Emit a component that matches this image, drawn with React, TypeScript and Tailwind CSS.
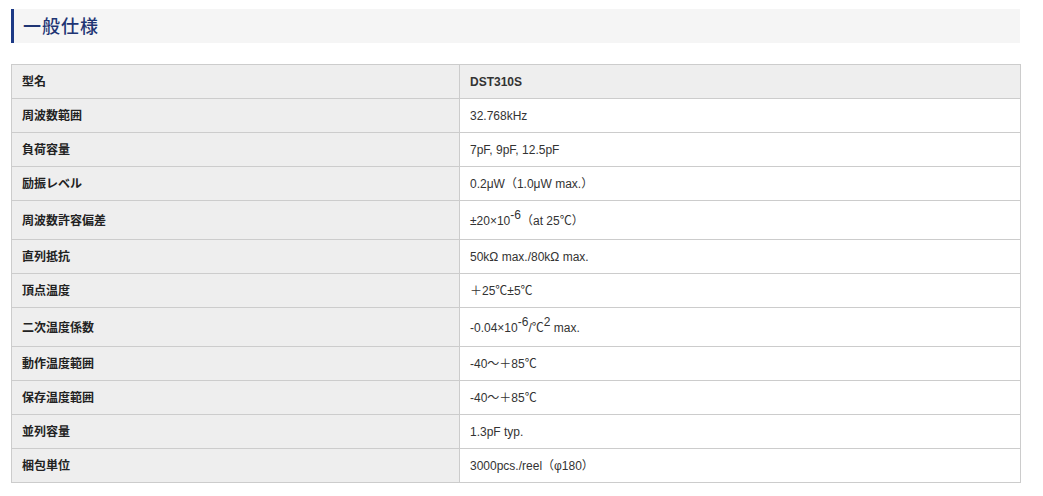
const rows: { label: string; value: React.ReactNode; tall?: boolean }[] = [
  { label: "周波数範囲", value: "32.768kHz" },
  { label: "負荷容量", value: "7pF, 9pF, 12.5pF" },
  { label: "励振レベル", value: "0.2μW（1.0μW max.）" },
  {
    label: "周波数許容偏差",
    value: (
      <>
        ±20×10<sup className="text-[12px]">-6</sup>（at 25℃）
      </>
    ),
    tall: true,
  },
  { label: "直列抵抗", value: "50kΩ max./80kΩ max." },
  { label: "頂点温度", value: "＋25℃±5℃" },
  {
    label: "二次温度係数",
    value: (
      <>
        -0.04×10<sup className="text-[12px]">-6</sup>/℃<sup className="text-[12px]">2</sup> max.
      </>
    ),
    tall: true,
  },
  { label: "動作温度範囲", value: "-40〜＋85℃" },
  { label: "保存温度範囲", value: "-40〜＋85℃" },
  { label: "並列容量", value: "1.3pF typ." },
  { label: "梱包単位", value: "3000pcs./reel（φ180）" },
];

export default function App() {
  return (
    <div
      className="w-[1043px] h-[496px] bg-white pt-[9px] pl-[11px] text-[#333]"
      style={{ fontFamily: '"Liberation Sans", Arial, "Noto Sans CJK JP", sans-serif' }}
    >
      <div className="w-[1009px] h-[34px] bg-[#f5f5f5] border-l-[3px] border-[#1d3a86] flex items-center pl-[9px] pt-[1px]">
        <h2 className="text-[18px] font-medium text-[#1f3574] tracking-[1px] leading-none">一般仕様</h2>
      </div>
      <table className="mt-[21px] w-[1010px] border-collapse text-[12px] leading-[15px]">
        <tbody>
          <tr className="h-[34px] bg-[#eeeeee]">
            <td className="w-[448px] border border-[#cccccc] pl-[10px] pt-[2px] font-bold text-[#222] align-middle">型名</td>
            <td className="border border-[#cccccc] pl-[10px] pt-[2px] font-bold text-[#333] align-middle">DST310S</td>
          </tr>
          {rows.map((r, i) => (
            <tr key={i} className={r.tall ? "h-[39px]" : "h-[34px]"}>
              <td className="bg-[#eeeeee] border border-[#cccccc] pl-[10px] pt-[2px] font-bold text-[#222] align-middle">
                {r.label}
              </td>
              <td className="bg-white border border-[#cccccc] pl-[10px] pt-[2px] text-[#333] align-middle">
                {r.value}
              </td>
            </tr>
          ))}
        </tbody>
      </table>
    </div>
  );
}
